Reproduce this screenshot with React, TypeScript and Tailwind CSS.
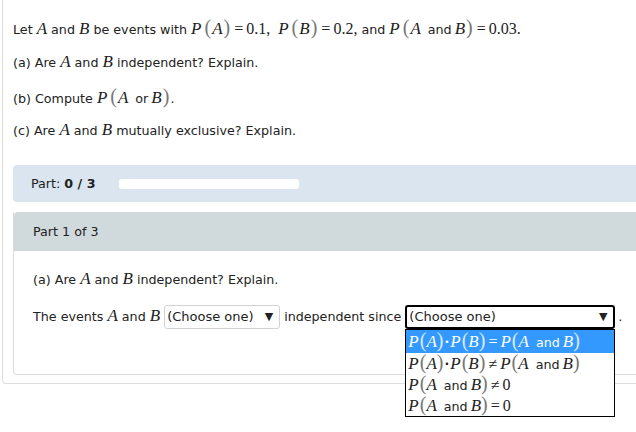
import React from "react";

const sans = { fontFamily: '"DejaVu Sans", Verdana, sans-serif' };
const serif = { fontFamily: '"Liberation Serif", "Times New Roman", serif' };

function Paren({ children, light, tight }: { children: React.ReactNode; light?: boolean; tight?: boolean }) {
  return (
    <span className={(tight ? "" : "mx-[1px] ") + (light ? "text-white/80" : "text-[#777]")} style={{ ...serif, fontSize: "20px", lineHeight: 1 }}>
      {children}
    </span>
  );
}

function V({ children }: { children: React.ReactNode }) {
  return <i style={serif} className="text-[17px] leading-none">{children}</i>;
}

function N({ children }: { children: React.ReactNode }) {
  return <span style={serif} className="text-[16px] leading-none">{children}</span>;
}

function Eq({ sym = "=" }: { sym?: string }) {
  return <span style={serif} className="mx-[3px] text-[16px] leading-none">{sym}</span>;
}

function Prob({ children, light, tight }: { children: React.ReactNode; light?: boolean; tight?: boolean }) {
  return (
    <span className="whitespace-nowrap">
      <V>P</V>
      <span className={tight ? "inline-block w-[1px]" : "inline-block w-[2px]"} />
      <Paren light={light} tight={tight}>(</Paren>
      {children}
      <Paren light={light} tight={tight}>)</Paren>
    </span>
  );
}

function AandB() {
  return (
    <>
      <V>A</V>
      <span className="inline-block w-[7px]" />
      <span>and</span>
      <span className="inline-block w-[3px]" />
      <V>B</V>
    </>
  );
}

function Dot() {
  return <span className="mx-[1px] font-bold">·</span>;
}

function Select({ width, focused }: { width: string; focused?: boolean }) {
  return (
    <span
      className={
        "inline-flex items-center justify-between h-[24px] bg-white pl-[2px] pr-[3px] " +
        width +
        (focused ? " border-2 border-black rounded-[3px]" : " border border-[#d2d2d2] rounded-[3px]")
      }
    >
      <span className="text-[13px]">(Choose one)</span>
      <span className="text-[11px] mr-[3px]">▼</span>
    </span>
  );
}

export default function App() {
  return (
    <div className="w-[636px] h-[432px] overflow-hidden bg-white text-[#222] text-[12.7px]" style={sans}>
      <div className="ml-[2px] w-[680px] h-[384px] border-l border-b border-[#dedede] rounded-bl-[4px] pl-[10px] pt-[17px]">
        <div className="flex flex-col gap-[12px]">
          <p className="h-[22px] leading-[22px] whitespace-nowrap">
            Let <V>A</V> and <V>B</V> be events with{" "}
            <Prob><V>A</V></Prob><Eq /><N>0.1,</N>
            <span className="inline-block w-[8px]" />
            <Prob><V>B</V></Prob><Eq /><N>0.2,</N>
            {" "}and <Prob><AandB /></Prob><Eq /><N>0.03.</N>
          </p>
          <p className="h-[22px] leading-[22px] mt-[1px]">
            (a) Are <V>A</V> and <V>B</V> independent? Explain.
          </p>
          <p className="h-[22px] leading-[22px]">
            (b) Compute <Prob><V>A</V><span className="inline-block w-[7px]" />or<span className="inline-block w-[3px]" /><V>B</V></Prob>.
          </p>
          <p className="h-[22px] leading-[22px]">
            (c) Are <V>A</V> and <V>B</V> mutually exclusive? Explain.
          </p>
        </div>

        <div className="mt-[23px] h-[37px] bg-[#dae5ef] rounded-l-[4px] flex items-center pl-[18px]">
          <span>
            Part: <b>0 / 3</b>
          </span>
          <span className="ml-[24px] w-[180px] h-[10px] bg-white rounded-[3px]" />
        </div>

        <div className="mt-[10px] h-[163px] border-l border-b border-[#dcdcdc] rounded-bl-[4px]">
          <div className="h-[39px] bg-[#d0d9dc] rounded-tl-[4px] flex items-center pl-[19px]">Part 1 of 3</div>
          <div className="pl-[19px] pt-[18px]">
            <p className="h-[22px] leading-[22px]">
              (a) Are <V>A</V> and <V>B</V> independent? Explain.
            </p>
            <div className="mt-[13px] flex items-center gap-[4px] h-[26px] whitespace-nowrap">
              <span>
                The events <V>A</V> and <V>B</V>
              </span>
              <Select width="w-[116px]" />
              <span>independent since</span>
              <span className="relative inline-flex">
                <Select width="w-[210px]" focused />
                <div className="absolute left-0 top-[24px] w-[210px] border border-black bg-white z-10 text-[12.7px]">
                  <div className="h-[23px] flex items-center pl-[2px] bg-[#3399ff] text-white">
                    <Prob light tight><V>A</V></Prob>
                    <Dot />
                    <Prob light tight><V>B</V></Prob>
                    <Eq />
                    <Prob light tight><AandB /></Prob>
                  </div>
                  <div className="h-[21px] flex items-center pl-[2px]">
                    <Prob tight><V>A</V></Prob>
                    <Dot />
                    <Prob tight><V>B</V></Prob>
                    <Eq sym="≠" />
                    <Prob tight><AandB /></Prob>
                  </div>
                  <div className="h-[21px] flex items-center pl-[2px]">
                    <Prob tight><AandB /></Prob>
                    <Eq sym="≠" />
                    <N>0</N>
                  </div>
                  <div className="h-[21px] flex items-center pl-[2px]">
                    <Prob tight><AandB /></Prob>
                    <Eq />
                    <N>0</N>
                  </div>
                </div>
              </span>
              <span className="-ml-[1px]">.</span>
            </div>
          </div>
        </div>
      </div>
    </div>
  );
}
